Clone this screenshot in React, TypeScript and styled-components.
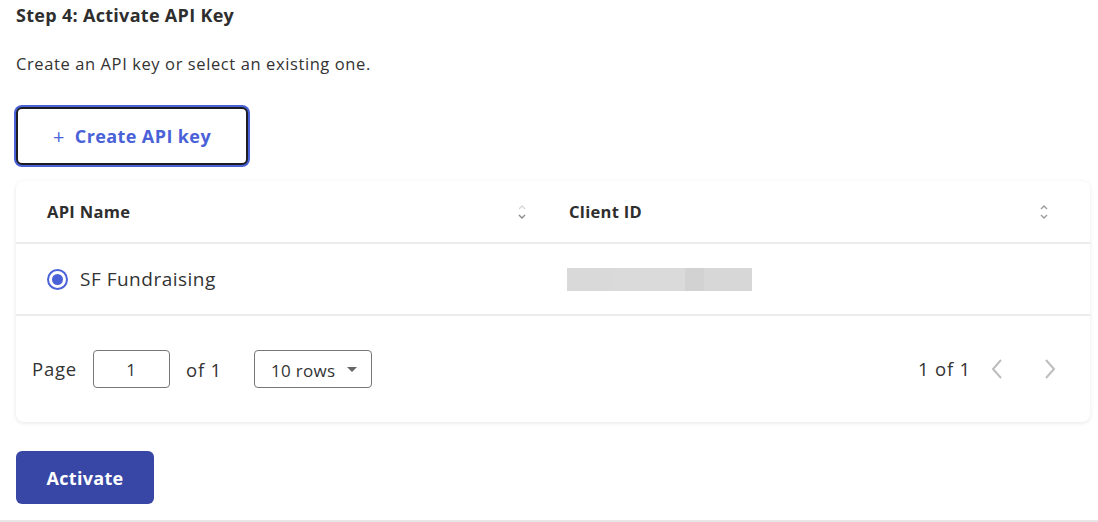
import React from "react";
import styled, { createGlobalStyle } from "styled-components";

const Global = createGlobalStyle`
  html, body {
    margin: 0;
    padding: 0;
    background: #fff;
    font-family: "Open Sans", "Noto Sans", sans-serif;
    color: #333;
  }
  * { box-sizing: border-box; }
`;

const Page = styled.div`
  width: 1098px;
  height: 522px;
  padding: 3px 8px 0 16px;
  border-bottom: 2px solid #e6e6e6;
  display: flex;
  flex-direction: column;
`;

const Title = styled.h2`
  margin: 0;
  font-size: 18px;
  font-weight: 700;
  letter-spacing: 0.3px;
  color: #2e2e2e;
  line-height: 25px;
`;

const Subtitle = styled.p`
  margin: 25px 0 0 0;
  font-size: 16.5px;
  letter-spacing: 0.6px;
  line-height: 22px;
  color: #333;
`;

const CreateButton = styled.button`
  margin-top: 32px;
  width: 232px;
  height: 58px;
  border: 2px solid #1d1d24;
  border-radius: 6px;
  box-shadow: 0 0 0 2px #4a62d8;
  background: #fff;
  color: #4a62d8;
  font-family: inherit;
  font-size: 18px;
  font-weight: 700;
  letter-spacing: 0.4px;
  display: flex;
  align-items: center;
  justify-content: center;
  gap: 10px;
  cursor: pointer;
  span.plus {
    font-weight: 400;
    font-size: 20px;
  }
`;

const Card = styled.div`
  margin-top: 16px;
  width: 1074px;
  border-radius: 8px;
  background: #fff;
  box-shadow: 0 1px 4px rgba(0, 0, 0, 0.1);
`;

const Row = styled.div<{ $h: number }>`
  display: grid;
  grid-template-columns: 522px 1fr;
  height: ${(p) => p.$h}px;
  border-bottom: 2px solid #ececec;
  align-items: center;
`;

const HeadCell = styled.div<{ $pl: number; $pr: number }>`
  display: flex;
  align-items: center;
  justify-content: space-between;
  padding-left: ${(p) => p.$pl}px;
  padding-right: ${(p) => p.$pr}px;
  font-size: 16.5px;
  font-weight: 700;
  letter-spacing: 0.3px;
  color: #2e2e2e;
`;

const Cell = styled.div<{ $pl: number }>`
  display: flex;
  align-items: center;
  gap: 12px;
  padding-left: ${(p) => p.$pl}px;
  font-size: 19px;
  letter-spacing: 0.5px;
  color: #333;
`;

const Radio = styled.span`
  width: 21px;
  height: 21px;
  border-radius: 50%;
  border: 2px solid #4a62d8;
  display: inline-flex;
  align-items: center;
  justify-content: center;
  &::after {
    content: "";
    width: 11px;
    height: 11px;
    border-radius: 50%;
    background: #4a62d8;
  }
`;

const Redacted = styled.div`
  width: 185px;
  height: 23px;
  background: linear-gradient(
    90deg,
    #d9d9d9 0 47px,
    #dadada 47px 118px,
    #d2d2d2 118px 137px,
    #d7d7d7 137px
  );
`;

const Footer = styled.div`
  height: 106px;
  display: flex;
  align-items: center;
  padding: 0 27px 0 16px;
  font-size: 18.5px;
  letter-spacing: 0.8px;
  color: #333;
`;

const Label = styled.span`
  line-height: 22px;
`;

const PageInput = styled.div`
  margin-left: 16px;
  width: 77px;
  height: 38px;
  border: 1px solid #777;
  border-radius: 4px;
  display: flex;
  align-items: center;
  justify-content: center;
  font-size: 17px;
`;

const Of = styled.span`
  margin-left: 16px;
`;

const Select = styled.div`
  margin-left: 32px;
  width: 118px;
  height: 38px;
  border: 1px solid #777;
  border-radius: 4px;
  display: flex;
  align-items: center;
  justify-content: space-between;
  padding: 3px 14px 0 16px;
  font-size: 17px;
  letter-spacing: 0.3px;
  &::after {
    content: "";
    border-left: 5px solid transparent;
    border-right: 5px solid transparent;
    border-top: 5px solid #666;
    margin-top: -3px;
  }
`;

const Spacer = styled.div`
  flex: 1;
`;

const Nav = styled.div`
  display: flex;
  align-items: center;
  gap: 13px;
`;

const Chevrons = styled.div`
  display: flex;
  gap: 27px;
`;

const Chevron = styled.button`
  border: none;
  background: none;
  padding: 0;
  width: 26px;
  height: 26px;
  display: flex;
  align-items: center;
  justify-content: center;
`;

const Activate = styled.button`
  margin-top: 29px;
  width: 138px;
  height: 53px;
  border: none;
  border-radius: 6px;
  background: #3847a6;
  color: #fff;
  font-family: inherit;
  font-size: 18px;
  font-weight: 700;
  letter-spacing: 0.3px;
`;

const SortIcon = ({ up, down }: { up: string; down: string }) => (
  <svg width="10" height="18" viewBox="0 0 10 18" fill="none" strokeWidth="1.4">
    <path d="M2 6 L5 3 L8 6" stroke={up} />
    <path d="M2 12 L5 15 L8 12" stroke={down} />
  </svg>
);

const ChevronIcon = ({ dir }: { dir: "left" | "right" }) => (
  <svg width="14" height="22" viewBox="0 0 14 22" fill="none" stroke="#bdbdbd" strokeWidth="2">
    {dir === "left" ? <path d="M11 2 L3 11 L11 20" /> : <path d="M3 2 L11 11 L3 20" />}
  </svg>
);

export default function App() {
  return (
    <>
      <Global />
      <Page>
        <Title>Step 4: Activate API Key</Title>
        <Subtitle>Create an API key or select an existing one.</Subtitle>
        <CreateButton>
          <span className="plus">+</span>
          <span>Create API key</span>
        </CreateButton>
        <Card>
          <Row $h={63}>
            <HeadCell $pl={31} $pr={11}>
              API Name
              <SortIcon up="#d8d8d8" down="#8a8a8a" />
            </HeadCell>
            <HeadCell $pl={31} $pr={41}>
              Client ID
              <SortIcon up="#9a9a9a" down="#9a9a9a" />
            </HeadCell>
          </Row>
          <Row $h={72}>
            <Cell $pl={31}>
              <Radio />
              SF Fundraising
            </Cell>
            <Cell $pl={29}>
              <Redacted />
            </Cell>
          </Row>
          <Footer>
            <Label>Page</Label>
            <PageInput>1</PageInput>
            <Of>of 1</Of>
            <Select>10 rows</Select>
            <Spacer />
            <Nav>
              <Label>1 of 1</Label>
              <Chevrons>
                <Chevron aria-label="previous">
                  <ChevronIcon dir="left" />
                </Chevron>
                <Chevron aria-label="next">
                  <ChevronIcon dir="right" />
                </Chevron>
              </Chevrons>
            </Nav>
          </Footer>
        </Card>
        <Activate>Activate</Activate>
      </Page>
    </>
  );
}
